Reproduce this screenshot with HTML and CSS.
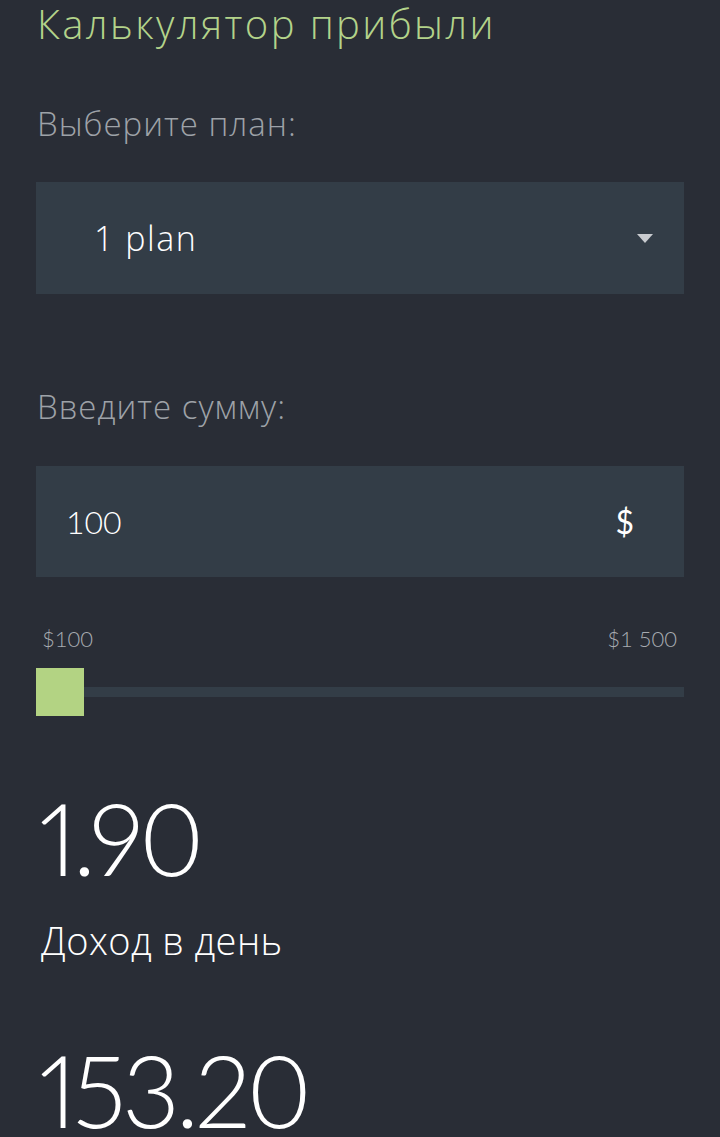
FILE: index.html
```html
<!DOCTYPE html>
<html lang="ru">
<head>
    <meta charset="UTF-8">
    <meta name="viewport" content="width=device-width, initial-scale=1.0">
    <title>Калькулятор прибыли</title>
    <link rel="stylesheet" href="styles.css">
</head>
<body>

<div class="calc">
    <h2 class="title">Калькулятор прибыли</h2>

    <label class="label" for="plan">Выберите план:</label>
    <div class="field select-wrap">
        <select id="plan" class="plan-select">
            <option value="1">1 plan</option>
            <option value="2">2 plan</option>
            <option value="3">3 plan</option>
        </select>
        <svg class="arrow" width="16" height="9" viewBox="0 0 16 9"><path d="M0 0h16L8 9z" fill="#c9ccd0"/></svg>
    </div>

    <label class="label label-sum" for="amount">Введите сумму:</label>
    <div class="field amount-wrap">
        <input type="text" id="amount" class="amount" value="100">
        <span class="currency">$</span>
    </div>

    <div class="range-labels">
        <span>$100</span>
        <span>$1 500</span>
    </div>
    <input type="range" id="slider" class="slider" min="100" max="1500" value="100">

    <div class="result result-day" id="daily">1.90</div>
    <div class="result-caption">Доход в день</div>

    <div class="result result-total" id="total">153.20</div>
</div>

</body>
</html>
```
FILE: styles.css
```css
body {
    margin: 0;
    background-color: #292d36;
    font-family: "Open Sans", Lato, sans-serif;
    font-weight: 300;
    color: #ffffff;
}
.calc {
    padding: 0 36px;
}
.title {
    margin: 0;
    font-size: 40px;
    line-height: 48px;
    font-weight: 300;
    letter-spacing: 2.4px;
    color: #b3d38a;
    padding-left: 1px;
}
.label {
    display: block;
    margin-top: 56px;
    font-size: 33px;
    line-height: 40px;
    letter-spacing: 1px;
    color: #9ea2a8;
    padding-left: 1px;
}
.label-sum {
    margin-top: 93px;
}
.field {
    display: flex;
    align-items: center;
    background-color: #333d47;
    height: 112px;
    margin-top: 38px;
}
.select-wrap {
    padding: 0 31px 0 58px;
}
.plan-select {
    flex: 1;
    appearance: none;
    -webkit-appearance: none;
    background: transparent;
    border: none;
    outline: none;
    color: #ffffff;
    font-family: inherit;
    font-weight: 300;
    font-size: 34px;
    letter-spacing: 1.5px;
    padding: 0;
}
.arrow {
    display: block;
}
.amount-wrap {
    margin-top: 39px;
    height: 111px;
    padding: 0 50px 0 30px;
}
.amount {
    flex: 1;
    min-width: 0;
    background: transparent;
    border: none;
    outline: none;
    color: #ffffff;
    font-family: Lato, sans-serif;
    font-weight: 300;
    font-size: 32px;
    padding: 0;
}
.currency {
    font-family: Lato, sans-serif;
    font-size: 32px;
    font-weight: 400;
}
.range-labels {
    display: flex;
    justify-content: space-between;
    margin-top: 50px;
    padding: 0 7px 0 6px;
    font-family: Lato, sans-serif;
    font-size: 22px;
    line-height: 24px;
    color: #a7abb1;
}
.slider {
    display: block;
    width: 100%;
    height: 48px;
    margin: 17px 0 0;
    -webkit-appearance: none;
    appearance: none;
    background: transparent;
}
.slider::-webkit-slider-runnable-track {
    height: 10px;
    background-color: #333d47;
}
.slider::-webkit-slider-thumb {
    -webkit-appearance: none;
    width: 48px;
    height: 48px;
    margin-top: -19px;
    background-color: #b3d383;
    border: none;
    border-radius: 0;
}
.result {
    font-family: Lato, sans-serif;
    font-variant-numeric: proportional-nums;
    font-size: 100px;
    line-height: 100px;
    letter-spacing: -4px;
    padding-left: 3px;
}
.result-day {
    margin-top: 71px;
}
.result-caption {
    margin-top: 31px;
    font-size: 38px;
    line-height: 44px;
    letter-spacing: 0.4px;
    padding-left: 5px;
}
.result-total {
    margin-top: 77px;
}
```
